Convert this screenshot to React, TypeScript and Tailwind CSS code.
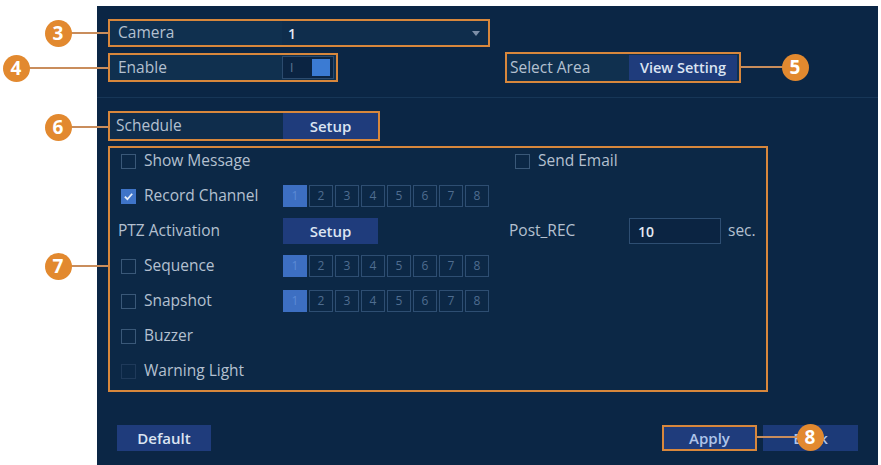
import React from "react";

const ORANGE = "border-[#d8873c]";

function Circle({ n, x, y }: { n: string; x: number; y: number }) {
  return (
    <div
      className="absolute w-[27px] h-[27px] rounded-full bg-[#e2892f] flex items-center justify-center text-white text-[19px] font-bold leading-none"
      style={{ left: x - 13.5, top: y - 13.5, fontFamily: "'Open Sans', sans-serif" }}
    >
      {n}
    </div>
  );
}

function Line({ x1, x2, y }: { x1: number; x2: number; y: number }) {
  return <div className="absolute h-[2px] bg-[#c98d5c]" style={{ left: x1, top: y - 1, width: x2 - x1 }} />;
}

function Check({ checked = false, dim = false }: { checked?: boolean; dim?: boolean }) {
  if (checked) {
    return (
      <div className="w-[15px] h-[15px] bg-[#3f74c8] flex items-center justify-center">
        <svg width="11" height="11" viewBox="0 0 12 12">
          <path d="M2 6.2 L4.8 9 L10 3" stroke="#e6eefa" strokeWidth="2" fill="none" />
        </svg>
      </div>
    );
  }
  return <div className={`w-[15px] h-[15px] border ${dim ? "border-[#1f3a5a]" : "border-[#3a5878]"}`} />;
}

function Channels() {
  const nums = [1, 2, 3, 4, 5, 6, 7, 8];
  return (
    <div className="flex gap-[2px]">
      {nums.map((n) =>
        n === 1 ? (
          <div key={n} className="w-[24px] h-[22px] bg-[#3d6fc2] flex items-center justify-center text-[12px] text-[#5b8ad6]">
            1
          </div>
        ) : (
          <div key={n} className="w-[24px] h-[22px] border border-[#2e4e72] flex items-center justify-center text-[12px] text-[#4f6d90]">
            {n}
          </div>
        )
      )}
    </div>
  );
}

function SetupBtn({ label = "Setup" }: { label?: string }) {
  return (
    <div className="w-[95px] h-[26px] bg-[#1f3c7c] flex items-center justify-center text-[#dbe4f2] text-[15px] font-semibold">
      {label}
    </div>
  );
}

export default function App() {
  return (
    <div
      className="relative w-[881px] h-[465px] bg-white overflow-hidden"
      style={{ fontFamily: "'Open Sans', 'Noto Sans', sans-serif" }}
    >
      <div className="ml-[97px] mt-[6px] w-[781px] h-[459px] bg-[#0b2645] pl-[11px] pt-[13px] flex flex-col text-[15.5px] text-[#b4c0d0]">
        {/* Camera */}
        <div className={`w-[382px] h-[28px] border-2 ${ORANGE} flex bg-[#10304f]`}>
          <div className="w-[172px] flex items-center pl-[8px]">Camera</div>
          <div className="flex-1 flex items-center justify-between pl-[6px] pr-[8px] bg-[#0f2d4c] text-[#e4eaf3] font-semibold text-[14px]">
            <span>1</span>
            <svg width="8" height="5" viewBox="0 0 8 5">
              <path d="M0 0 L8 0 L4 5 Z" fill="#7d8fa8" />
            </svg>
          </div>
        </div>

        {/* Enable + Select Area */}
        <div className="flex items-center mt-[5px]">
          <div className={`w-[230px] h-[29px] border-2 ${ORANGE} flex items-center bg-[#10304f]`}>
            <div className="w-[172px] pl-[8px]">Enable</div>
            <div className="w-[52px] h-[23px] border border-[#2c4b6e] bg-[#0b2442] flex items-center pl-[7px] pr-[3px] justify-between">
              <span className="text-[12px] text-[#5d7694]">I</span>
              <div className="w-[18px] h-[17px] bg-[#3b7bd3]" />
            </div>
          </div>
          <div className={`ml-[167px] w-[236px] h-[31px] border-2 ${ORANGE} flex items-center bg-[#10304f]`}>
            <div className="w-[122px] pl-[3px]">Select Area</div>
            <div className="w-[108px] h-[25px] bg-[#1f3c7c] flex items-center justify-center text-[#dbe4f2] font-semibold text-[14.5px]">
              View Setting
            </div>
          </div>
        </div>

        <div className="h-[1px] bg-[#173657] mt-[14px] -ml-[11px] w-[781px]" />

        {/* Schedule */}
        <div className={`mt-[13px] w-[272px] h-[30px] border-2 ${ORANGE} flex items-center bg-[#0f2d4c]`}>
          <div className="w-[173px] pl-[6px]">Schedule</div>
          <SetupBtn />
        </div>

        {/* Big box */}
        <div className={`mt-[5px] w-[660px] h-[246px] border-2 ${ORANGE} pb-[6px] flex flex-col gap-[9px] bg-[#0c2846]`}>
          <div className="h-[26px] flex items-center">
            <div className="w-[399px] flex items-center gap-[8px] pl-[11px]">
              <Check />
              <span>Show Message</span>
            </div>
            <div className="flex items-center gap-[8px] pl-[6px]">
              <Check />
              <span>Send Email</span>
            </div>
          </div>
          <div className="h-[26px] flex items-center">
            <div className="w-[173px] flex items-center gap-[8px] pl-[11px]">
              <Check checked />
              <span>Record Channel</span>
            </div>
            <Channels />
          </div>
          <div className="h-[26px] flex items-center">
            <div className="w-[173px] pl-[8px]">PTZ Activation</div>
            <SetupBtn />
            <div className="ml-[131px] w-[120px]">Post_REC</div>
            <div className="w-[92px] h-[26px] border border-[#2e4e72] bg-[#0b2442] flex items-center pl-[8px] text-[#e4eaf3] font-semibold text-[14px]">
              10
            </div>
            <div className="ml-[7px]">sec.</div>
          </div>
          <div className="h-[26px] flex items-center">
            <div className="w-[173px] flex items-center gap-[8px] pl-[11px]">
              <Check />
              <span>Sequence</span>
            </div>
            <Channels />
          </div>
          <div className="h-[26px] flex items-center">
            <div className="w-[173px] flex items-center gap-[8px] pl-[11px]">
              <Check />
              <span>Snapshot</span>
            </div>
            <Channels />
          </div>
          <div className="h-[26px] flex items-center">
            <div className="flex items-center gap-[8px] pl-[11px]">
              <Check />
              <span>Buzzer</span>
            </div>
          </div>
          <div className="h-[26px] flex items-center">
            <div className="flex items-center gap-[8px] pl-[11px]">
              <Check dim />
              <span>Warning Light</span>
            </div>
          </div>
        </div>

        {/* Bottom buttons */}
        <div className="mt-[33px] flex items-center">
          <div className="ml-[9px] w-[94px] h-[26px] bg-[#1f3c7c] flex items-center justify-center text-[#dbe4f2] font-semibold text-[15px]">
            Default
          </div>
          <div className={`ml-[451px] w-[95px] h-[26px] border-2 ${ORANGE} bg-[#1f3c7c] flex items-center justify-center text-[#aec4ea] font-semibold text-[15px]`}>
            Apply
          </div>
          <div className="ml-[6px] w-[95px] h-[26px] bg-[#1c3a78] flex items-center justify-center text-[#aec4ea] font-semibold text-[15px]">
            Back
          </div>
        </div>
      </div>

      {/* annotations */}
      <Line x1={70} x2={108} y={33} />
      <Line x1={28} x2={108} y={68} />
      <Line x1={70} x2={108} y={127} />
      <Line x1={70} x2={108} y={266} />
      <Line x1={741} x2={784} y={67} />
      <Line x1={757} x2={798} y={437} />
      <Circle n="3" x={58} y={33} />
      <Circle n="4" x={16} y={68} />
      <Circle n="6" x={58} y={127} />
      <Circle n="7" x={58} y={266} />
      <Circle n="5" x={795} y={67} />
      <Circle n="8" x={810} y={437} />
    </div>
  );
}
